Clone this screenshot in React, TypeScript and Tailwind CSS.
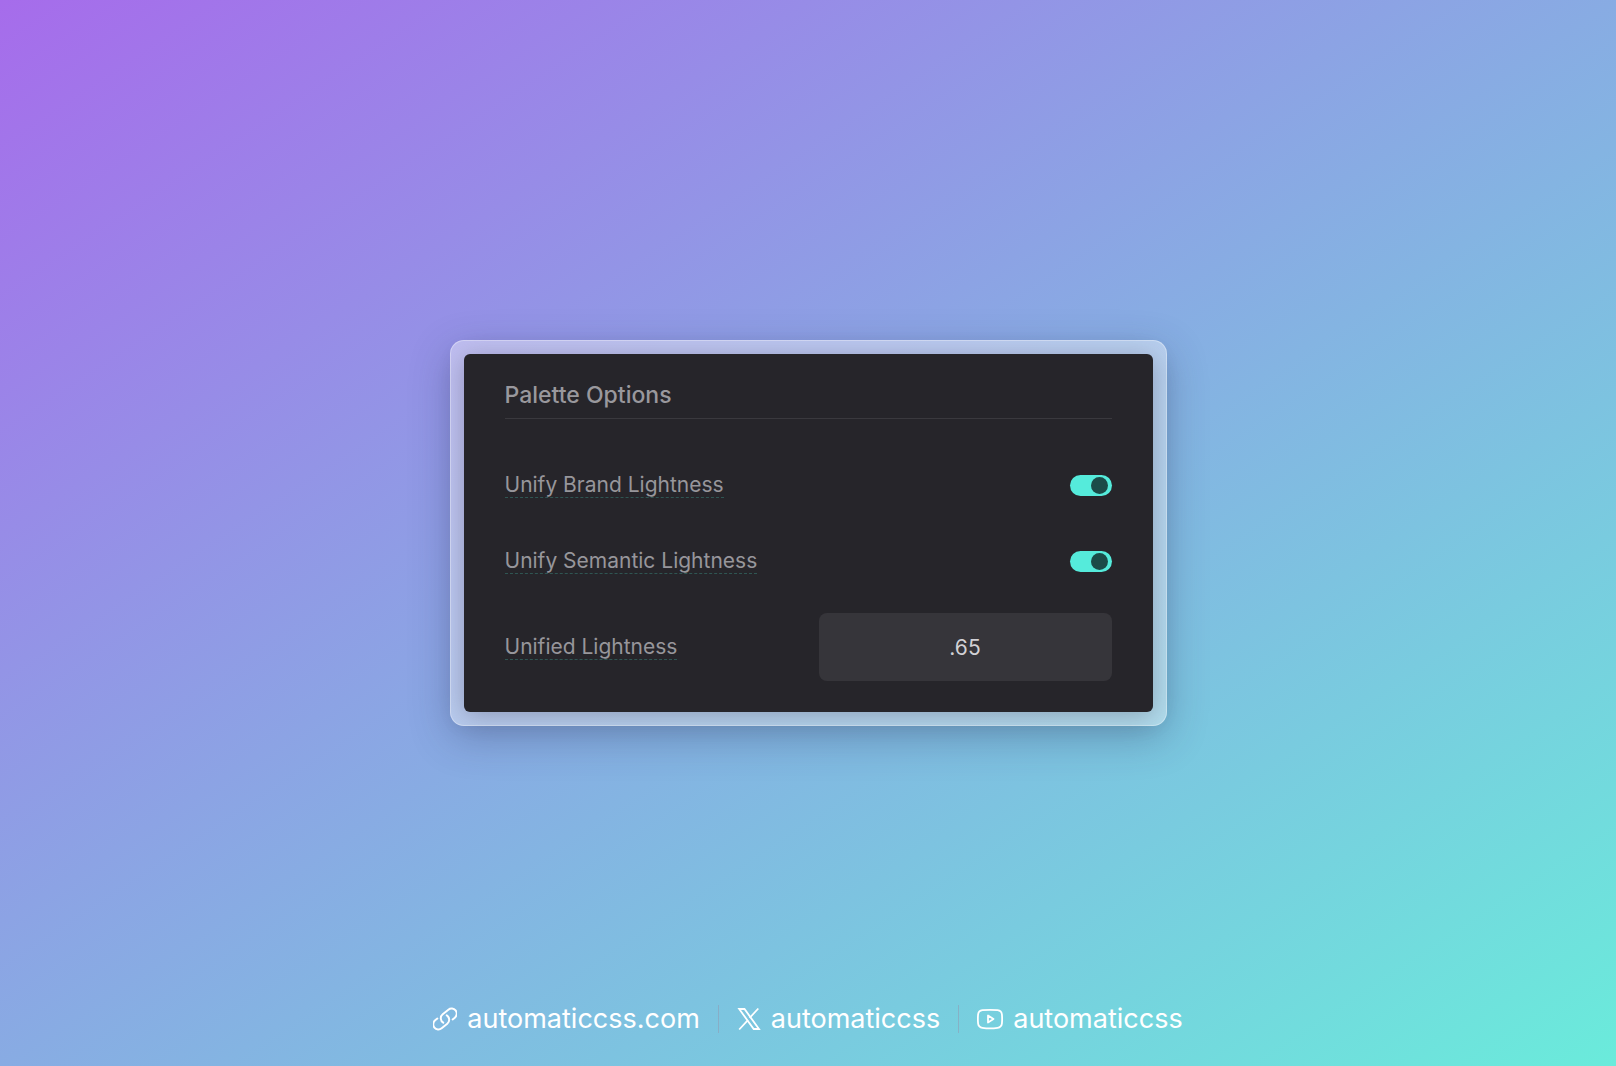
import React, { useState } from 'react';

interface ToggleRowProps {
  id: string;
  label: string;
}

const labelText = 'border-b border-dashed border-[#2f5653] text-[21px] leading-6 text-[#97969b]';

const ToggleRow: React.FC<ToggleRowProps> = ({ id, label }) => {
  const [checked, setChecked] = useState(true);

  return (
    <div className="flex h-6 items-center justify-between">
      <label htmlFor={id} className={labelText}>
        {label}
      </label>
      <input
        type="checkbox"
        role="switch"
        id={id}
        checked={checked}
        onChange={(e) => setChecked(e.target.checked)}
        className="flex h-[21px] w-[42px] cursor-pointer appearance-none items-center rounded-full bg-[#4b4a50] px-1 before:size-[17px] before:rounded-full before:bg-[#1b4b48] checked:justify-end checked:bg-[#55ebdb]"
      />
    </div>
  );
};

const LinkIcon = () => (
  <svg className="size-6" viewBox="1.5 1.5 21 21" fill="none" stroke="currentColor" strokeWidth={1.7} strokeLinecap="round" strokeLinejoin="round">
    <path
      transform="rotate(6 12 12)"
      d="M13.19 8.688a4.5 4.5 0 0 1 1.242 7.244l-4.5 4.5a4.5 4.5 0 0 1-6.364-6.364l1.757-1.757m13.35-.622 1.757-1.757a4.5 4.5 0 0 0-6.364-6.364l-4.5 4.5a4.5 4.5 0 0 0 1.242 7.244"
    />
  </svg>
);

const XIcon = () => (
  <svg className="size-6" viewBox="0 0 24 24" fill="none" stroke="currentColor" strokeWidth={1.8}>
    <path d="M2.200 2h5.300l14.500 20h-5.300z" />
    <path d="M21.300 1.500l-8.600 9.300M10.900 13.200L2.200 22.500" />
  </svg>
);

const VideoIcon = () => (
  <svg className="h-6 w-[26px]" viewBox="0 0 26 24" fill="none" stroke="currentColor" strokeWidth={1.8} strokeLinejoin="round">
    <path d="M13 2.800c3.200 0 5.500.1 7.600.4 2.500.4 4 1.900 4.300 4.200.3 2.900.3 6.300 0 9.200-.3 2.300-1.800 3.800-4.300 4.200-4.200.6-11 .6-15.200 0-2.500-.4-4-1.900-4.300-4.200-.3-2.900-.3-6.300 0-9.200.3-2.300 1.800-3.800 4.300-4.200 2.100-.3 4.400-.4 7.600-.4z" />
    <path d="M11 8.500v7l5.500-3.500z" />
  </svg>
);

const links = [
  { text: 'automaticcss.com', href: 'https://automaticcss.com', Icon: LinkIcon },
  { text: 'automaticcss', href: 'https://x.com/automaticcss', Icon: XIcon },
  { text: 'automaticcss', href: 'https://youtube.com/@automaticcss', Icon: VideoIcon },
];

const App: React.FC = () => {
  const [lightness, setLightness] = useState('.65');

  return (
    <div className="grid min-h-screen grid-rows-[1fr_auto_1fr] justify-items-center bg-[linear-gradient(to_bottom_right,#a66ceb,#6aebdb)] font-['Inter',sans-serif]">
      <main className="row-start-2 w-full max-w-[717px] rounded-[14px] border border-white/35 bg-white/40 p-[13px] shadow-[0_12px_40px_rgba(40,50,90,0.3)]">
        <section className="rounded-md bg-[#26252a] px-[41px] pt-[27px] pb-[31px] shadow-[0_4px_24px_rgba(50,40,60,0.3)]">
          <h1 className="border-b border-[#3a393e] pb-[9px] text-[23px] leading-7 font-medium text-[#99989d]">
            Palette Options
          </h1>
          <div className="mt-[54px] flex flex-col gap-[52px]">
            <ToggleRow id="brand-lightness" label="Unify Brand Lightness" />
            <ToggleRow id="semantic-lightness" label="Unify Semantic Lightness" />
          </div>
          <div className="mt-10 flex items-center justify-between">
            <label htmlFor="unified-lightness" className={labelText}>
              Unified Lightness
            </label>
            <input
              type="text"
              id="unified-lightness"
              value={lightness}
              onChange={(e) => setLightness(e.target.value)}
              className="h-[68px] w-[293px] rounded-lg bg-[#36353a] text-center text-[21px] text-[#d2d1d5] outline-none"
            />
          </div>
        </section>
      </main>

      <footer className="row-start-3 flex items-center self-end pb-[31px] text-[27px] leading-8 text-white">
        {links.map(({ text, href, Icon }, i) => (
          <React.Fragment key={href}>
            {i > 0 && <span className="mx-[18px] h-7 w-px bg-[#8f9fb5]/60" />}
            <a href={href} className="flex items-center gap-2.5">
              <Icon />
              {text}
            </a>
          </React.Fragment>
        ))}
      </footer>
    </div>
  );
};

export default App;
